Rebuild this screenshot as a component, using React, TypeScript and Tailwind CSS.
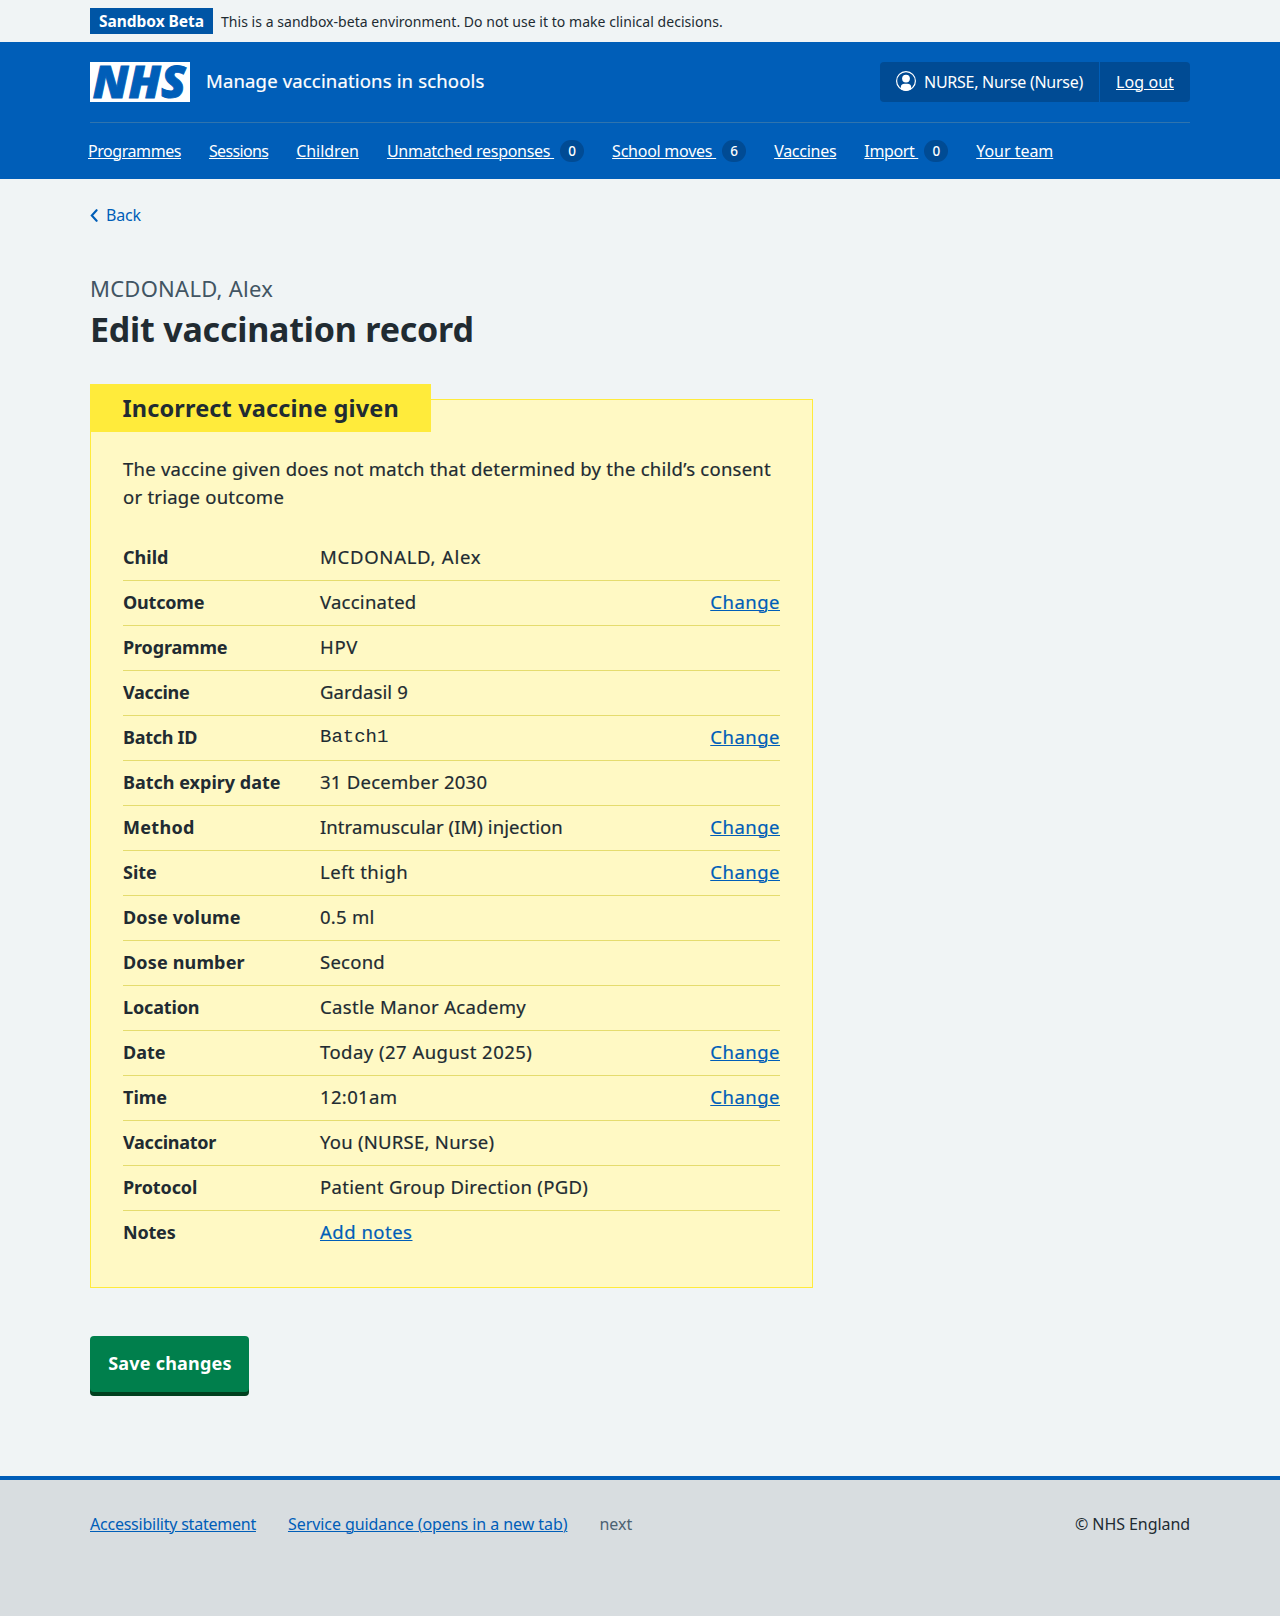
type Row = {
  label: string;
  value: string;
  labelTracking?: string;
  tracking?: string;
  change?: boolean;
  mono?: boolean;
  link?: boolean;
};

const rows: Row[] = [
  { label: "Child", value: "MCDONALD, Alex", tracking: "tracking-[0.73px]" },
  { label: "Outcome", value: "Vaccinated", change: true, labelTracking: "tracking-[-0.2px]" },
  { label: "Programme", value: "HPV", tracking: "tracking-[0.7px]", labelTracking: "tracking-[-0.15px]" },
  { label: "Vaccine", value: "Gardasil 9", tracking: "tracking-[0.12px]", labelTracking: "tracking-[-0.3px]" },
  { label: "Batch ID", value: "Batch1", change: true, mono: true, labelTracking: "tracking-[-0.3px]" },
  { label: "Batch expiry date", value: "31 December 2030", tracking: "tracking-[0.26px]" },
  { label: "Method", value: "Intramuscular (IM) injection", tracking: "tracking-[0.07px]", change: true, labelTracking: "tracking-[0.3px]" },
  { label: "Site", value: "Left thigh", change: true, tracking: "tracking-[0.45px]" },
  { label: "Dose volume", value: "0.5 ml", labelTracking: "tracking-[0.17px]" },
  { label: "Dose number", value: "Second", labelTracking: "tracking-[0.16px]" },
  { label: "Location", value: "Castle Manor Academy", tracking: "tracking-[0.33px]", labelTracking: "tracking-[-0.15px]" },
  { label: "Date", value: "Today (27 August 2025)", change: true, tracking: "tracking-[0.47px]" },
  { label: "Time", value: "12:01am", change: true, tracking: "tracking-[0.34px]" },
  { label: "Vaccinator", value: "You (NURSE, Nurse)", labelTracking: "tracking-[-0.25px]" },
  { label: "Protocol", value: "Patient Group Direction (PGD)", tracking: "tracking-[0.32px]", labelTracking: "tracking-[-0.1px]" },
  { label: "Notes", value: "Add notes", link: true, tracking: "tracking-[0.5px]", labelTracking: "tracking-[-0.2px]" },
];

const nav: { label: string; tracking: string; count?: number }[] = [
  { label: "Programmes", tracking: "tracking-[-0.44px]" },
  { label: "Sessions", tracking: "tracking-[-0.65px]" },
  { label: "Children", tracking: "tracking-[-0.08px]" },
  { label: "Unmatched responses", tracking: "tracking-[-0.28px]", count: 0 },
  { label: "School moves", tracking: "tracking-[-0.25px]", count: 6 },
  { label: "Vaccines", tracking: "tracking-[-0.27px]" },
  { label: "Import", tracking: "tracking-[-0.36px]", count: 0 },
  { label: "Your team", tracking: "tracking-[-0.04px]" },
];

const underline = "underline decoration-1 underline-offset-[1px]";

// Thickens regular-weight text slightly, towards the Frutiger book weight.
const sturdy = "[-webkit-text-stroke-width:0.2px]";

function Logo() {
  return (
    <svg width="100" height="40" viewBox="0 0 100 40" aria-label="NHS" role="img" className="overflow-visible">
      <rect width="100" height="40" fill="#fff" />
      <text
        x="2.8"
        y="36"
        fontFamily="'Open Sans', 'Noto Sans', sans-serif"
        fontWeight="800"
        fontStyle="italic"
        fontSize="45"
        textLength="93"
        lengthAdjust="spacingAndGlyphs"
        fill="#005eb8"
        stroke="#005eb8"
        strokeWidth="0.9"
      >
        NHS
      </text>
    </svg>
  );
}

function UserIcon() {
  return (
    <svg width="20" height="20" viewBox="0 0 20 20" className="shrink-0">
      <circle cx="10" cy="10" r="9.4" fill="none" stroke="#fff" strokeWidth="1.2" />
      <circle cx="10" cy="7.6" r="3.9" fill="#fff" />
      <path d="M4.8 18.2 V16.4 A3.8 3.6 0 0 1 8.6 12.8 H11.4 A3.8 3.6 0 0 1 15.2 16.4 V18.2 A9.6 9.6 0 0 1 4.8 18.2 Z" fill="#fff" />
    </svg>
  );
}

function Header() {
  return (
    <header className="h-[137px] bg-[#005eb8] text-white">
      <div className="mx-[90px] flex h-[81px] items-start border-b border-[#2f74ae] pt-5">
        <Logo />
        <span className={`${sturdy} ml-4 mt-[5px] text-[18.5px] leading-[27px] tracking-[0.16px]`}>
          Manage vaccinations in schools
        </span>
        <div className="ml-auto flex h-10 overflow-hidden rounded bg-[#004b94] text-base leading-6">
          <div className="flex w-[219px] items-start pl-4">
            <span className="mt-[9px]">
              <UserIcon />
            </span>
            <span className="ml-2 mt-2 whitespace-nowrap tracking-[-0.27px]">NURSE, Nurse (Nurse)</span>
          </div>
          <div className="w-[91px] border-l border-[#005eb8] pl-4 pt-2">
            <a className={`${underline} whitespace-nowrap tracking-[0.08px]`}>Log out</a>
          </div>
        </div>
      </div>
      <nav className="ml-[88px] flex gap-7 pt-4 text-base leading-6">
        {nav.map((n) => (
          <span key={n.label} className="flex">
            <a className={`${underline} whitespace-pre ${n.tracking}`}>
              {n.count === undefined ? n.label : `${n.label} `}
            </a>
            {n.count !== undefined && (
              <span className="ml-1.5 mt-px flex h-[22px] w-6 items-center justify-center rounded-full bg-[#004b94] pt-px text-[13.5px] font-medium leading-none">
                {n.count}
              </span>
            )}
          </span>
        ))}
      </nav>
    </header>
  );
}

function SummaryRow({ row, last }: { row: Row; last: boolean }) {
  return (
    <div className={`flex h-[45px] border-b pt-[7px] leading-7 ${last ? "border-transparent" : "border-[#e5dc6e]"}`}>
      <dt className={`w-[197px] text-[18px] font-bold ${row.labelTracking ?? ""}`}>{row.label}</dt>
      <dd className={`flex-1 ${row.mono ? "" : sturdy} ${row.tracking ?? "tracking-[0.25px]"}`}>
        {row.mono && (
          <span className="block h-7 font-['Liberation_Mono',monospace] text-[19px] leading-[29px] tracking-normal">
            {row.value}
          </span>
        )}
        {row.link && <a className={`${underline} text-[#005eb8]`}>{row.value}</a>}
        {!row.mono && !row.link && row.value}
      </dd>
      {row.change && <a className={`${underline} ${sturdy} tracking-[0.5px] text-[#005eb8]`}>Change</a>}
    </div>
  );
}

export default function App() {
  return (
    <div className="flex min-h-[1616px] flex-col bg-[#f0f4f5] font-['Noto_Sans',sans-serif] text-[#212b32]">
      <div className="flex h-[42px] items-start px-[90px] pt-2">
        <strong className="h-[26px] w-[123px] bg-[#0055a5] text-center text-[15.5px] font-bold leading-[27px] tracking-[-0.03px] text-white">
          Sandbox Beta
        </strong>
        <span className="ml-2 mt-[2px] text-sm leading-6 tracking-[0.04px]">
          This is a sandbox-beta environment. Do not use it to make clinical decisions.
        </span>
      </div>
      <Header />

      <main className="flex-1 px-[90px]">
        <a className="mt-6 flex h-6 items-center text-base leading-6 tracking-[-0.2px] text-[#005eb8]">
          <svg width="8" height="13" viewBox="0 0 8 13" className="mr-2">
            <path d="M6.6 1.2 L1.8 6.5 L6.6 11.8" fill="none" stroke="currentColor" strokeWidth="2.1" strokeLinecap="round" />
          </svg>
          Back
        </a>

        <h1 className="mt-[45px]">
          <span className="block text-[22px] leading-8 tracking-[0.25px] text-[#425563]">MCDONALD, Alex</span>
          <span className="mt-[3px] block text-[34px] font-bold leading-[44px] tracking-[-0.21px]">
            Edit vaccination record
          </span>
        </h1>

        <section className="mt-[48px] w-[723px] border border-[#ffeb3b] bg-[#fff9c4] px-8">
          <h2 className="-ml-[33px] -mt-4 h-12 w-[341px] bg-[#ffeb3b] pl-[32.5px] text-[23.5px] font-bold leading-[49px] tracking-[0.15px]">
            Incorrect vaccine given
          </h2>
          <p className={`${sturdy} mt-[23px] text-[18.5px] leading-7 tracking-[0.25px]`}>
            The vaccine given does not match that determined by the child’s consent
            <br />
            or triage outcome
          </p>
          <dl className="mb-[31px] mt-[25px] text-[18.5px]">
            {rows.map((r, i) => (
              <SummaryRow key={r.label} row={r} last={i === rows.length - 1} />
            ))}
          </dl>
        </section>

        <button className="mt-12 block h-14 w-[159px] rounded bg-[#007f4c] pl-px text-center text-[18px] font-bold leading-[54px] tracking-[0.22px] text-white shadow-[0_4px_0_#00401e]">
          <span className="block h-14">Save changes</span>
        </button>
      </main>

      <footer className="flex h-[140px] gap-8 border-t-4 border-[#005eb8] bg-[#d8dde0] px-[90px] pt-8 text-base leading-6">
        <a className={`${underline} tracking-[-0.23px] text-[#005eb8]`}>Accessibility statement</a>
        <a className={`${underline} tracking-[-0.07px] text-[#005eb8]`}>Service guidance (opens in a new tab)</a>
        <span className="text-[#4c6272]">next</span>
        <span className="ml-auto tracking-[-0.07px]">© NHS England</span>
      </footer>
    </div>
  );
}
